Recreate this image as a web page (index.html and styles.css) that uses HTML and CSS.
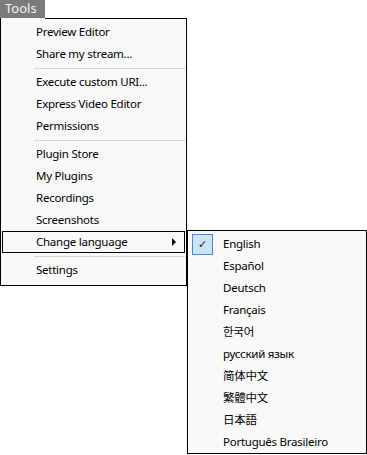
FILE: index.html
```html
<!DOCTYPE html>
<html>
<head>
<meta charset="utf-8">
<link rel="stylesheet" href="styles.css">
</head>
<body>
<div class="menubar">
  <div class="tab">Tools</div>
  <div class="tab-line"></div>
</div>
<div class="menu">
  <div class="item">Preview Editor</div>
  <div class="item">Share my stream...</div>
  <div class="sep"></div>
  <div class="item">Execute custom URI...</div>
  <div class="item">Express Video Editor</div>
  <div class="item">Permissions</div>
  <div class="sep"></div>
  <div class="item">Plugin Store</div>
  <div class="item">My Plugins</div>
  <div class="item">Recordings</div>
  <div class="item">Screenshots</div>
  <div class="item focused">Change language<span class="arrow"></span></div>
  <div class="sep"></div>
  <div class="item">Settings</div>
</div>
<div class="submenu">
  <div class="sitem checked"><span class="check">&#10003;</span>English</div>
  <div class="sitem">Español</div>
  <div class="sitem">Deutsch</div>
  <div class="sitem">Français</div>
  <div class="sitem">한국어</div>
  <div class="sitem">русский язык</div>
  <div class="sitem">简体中文</div>
  <div class="sitem">繁體中文</div>
  <div class="sitem">日本語</div>
  <div class="sitem">Português Brasileiro</div>
</div>
</body>
</html>
```
FILE: styles.css
```css
html, body {
  margin: 0;
  padding: 0;
  background: #fff;
}
body {
  font-family: "Noto Sans", "Noto Sans CJK KR", "Noto Sans CJK SC", sans-serif;
  font-size: 11.5px;
  letter-spacing: -0.25px;
  color: #000;
  position: relative;
  width: 367px;
  height: 455px;
  overflow: hidden;
}
.menubar {
  display: flex;
  height: 18px;
}
.tab {
  width: 45px;
  height: 18px;
  box-sizing: border-box;
  background: #7b7b7b;
  color: #f4f4f4;
  line-height: 17px;
  padding-left: 5px;
  font-size: 13px;
  letter-spacing: 0;
}
.tab-line {
  width: 142px;
  border-bottom: 1px solid #000;
  box-sizing: border-box;
  height: 19px;
}
.menu {
  width: 187px;
  box-sizing: border-box;
  border: 1px solid #000;
  border-top: none;
  background: #f9f9f9;
  padding: 3px 0 4px 1px;
  margin-top: 0;
}
.item {
  position: relative;
  height: 22px;
  line-height: 22px;
  padding-left: 34px;
  box-sizing: border-box;
  margin-right: 1px;
}
.item.focused {
  border: 1px solid #000;
  line-height: 20px;
  padding-left: 33px;
}
.arrow {
  position: absolute;
  right: 8px;
  top: 6px;
  width: 0;
  height: 0;
  border-left: 4px solid #000;
  border-top: 4px solid transparent;
  border-bottom: 4px solid transparent;
}
.sep {
  height: 6px;
  display: flex;
  align-items: center;
  padding-left: 32px;
  padding-right: 1px;
}
.sep::after {
  content: "";
  display: block;
  flex: 1;
  height: 1px;
  background: #d4d4d4;
}
.submenu {
  position: absolute;
  left: 187px;
  top: 230px;
  width: 180px;
  height: 224px;
  box-sizing: border-box;
  border: 1px solid #000;
  background: #f9f9f9;
  padding: 2px 0 0 1px;
}
.sitem {
  position: relative;
  height: 22px;
  line-height: 22px;
  padding-left: 34px;
}
.check {
  position: absolute;
  left: 3px;
  top: 1px;
  width: 19px;
  height: 19px;
  background: #cce4f7;
  border: 1px solid #3d8ee0;
  text-align: center;
  line-height: 19px;
  font-size: 11px;
  font-weight: bold;
  letter-spacing: 0;
  font-family: "DejaVu Sans", sans-serif;
  color: #222;
}
```
